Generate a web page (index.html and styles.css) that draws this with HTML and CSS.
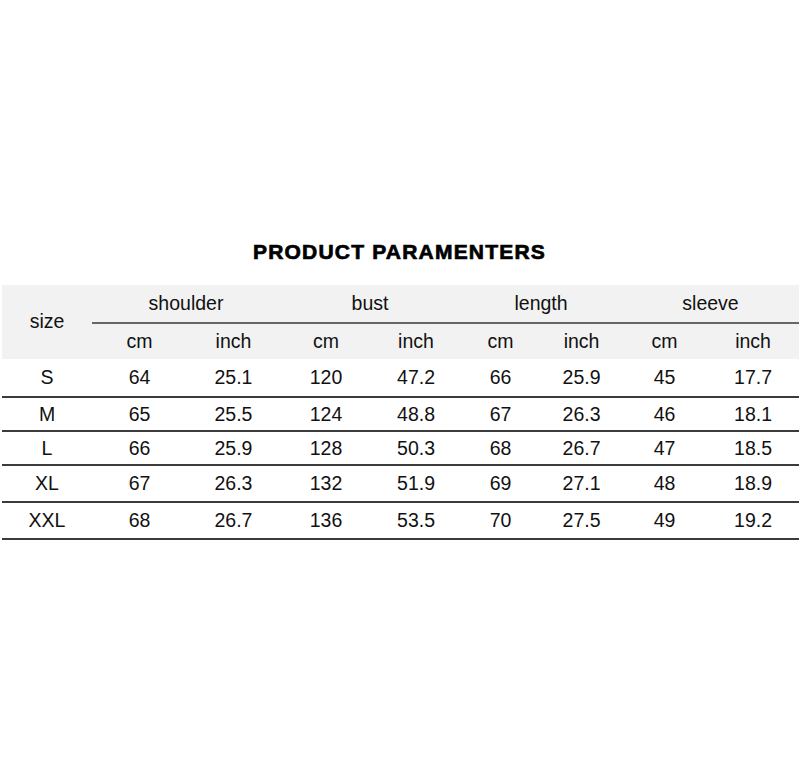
FILE: index.html
```html
<!DOCTYPE html>
<html>
<head>
<meta charset="utf-8">
<link rel="stylesheet" href="styles.css">
</head>
<body>
<div class="page">
  <h1 class="title">PRODUCT PARAMENTERS</h1>
  <table class="sizes">
    <colgroup>
      <col class="c-size"><col class="c1"><col class="c2"><col class="c3"><col class="c4"><col class="c5"><col class="c6"><col class="c7"><col class="c8">
    </colgroup>
    <thead>
      <tr class="h1">
        <th rowspan="2" class="size-h">size</th>
        <th colspan="2" class="grp">shoulder</th>
        <th colspan="2" class="grp">bust</th>
        <th colspan="2" class="grp">length</th>
        <th colspan="2" class="grp">sleeve</th>
      </tr>
      <tr class="h2">
        <th>cm</th><th>inch</th><th>cm</th><th>inch</th><th>cm</th><th>inch</th><th>cm</th><th>inch</th>
      </tr>
    </thead>
    <tbody>
      <tr class="r1"><td>S</td><td>64</td><td>25.1</td><td>120</td><td>47.2</td><td>66</td><td>25.9</td><td>45</td><td>17.7</td></tr>
      <tr class="r2"><td>M</td><td>65</td><td>25.5</td><td>124</td><td>48.8</td><td>67</td><td>26.3</td><td>46</td><td>18.1</td></tr>
      <tr class="r3"><td>L</td><td>66</td><td>25.9</td><td>128</td><td>50.3</td><td>68</td><td>26.7</td><td>47</td><td>18.5</td></tr>
      <tr class="r4"><td>XL</td><td>67</td><td>26.3</td><td>132</td><td>51.9</td><td>69</td><td>27.1</td><td>48</td><td>18.9</td></tr>
      <tr class="r5"><td>XXL</td><td>68</td><td>26.7</td><td>136</td><td>53.5</td><td>70</td><td>27.5</td><td>49</td><td>19.2</td></tr>
    </tbody>
  </table>
</div>
</body>
</html>
```

FILE: styles.css
```css
html, body {
  margin: 0;
  padding: 0;
  background: #ffffff;
}
body {
  font-family: "Liberation Sans", Arial, sans-serif;
  color: #111;
}
.page {
  width: 799px;
  height: 779px;
  padding-top: 240px;
  box-sizing: border-box;
}
.title {
  margin: 0 0 21px 0;
  text-align: center;
  font-size: 21px;
  line-height: 24px;
  font-weight: 700;
  letter-spacing: 1.2px;
  color: #000;
  -webkit-text-stroke: 0.7px #000;
}
.sizes {
  margin-left: 2px;
  width: 797px;
  border-collapse: collapse;
  table-layout: fixed;
  font-size: 19.5px;
}
.c-size { width: 90px; }
.c1 { width: 95px; }
.c2 { width: 93px; }
.c3 { width: 92px; }
.c4 { width: 88px; }
.c5 { width: 81px; }
.c6 { width: 81px; }
.c7 { width: 85px; }
.c8 { width: 92px; }
th, td {
  padding: 0;
  text-align: center;
  font-weight: 400;
  vertical-align: middle;
}
thead tr {
  background: #f2f2f2;
}
.h1 th {
  height: 37px;
}
.h1 .grp {
  border-bottom: 2px solid #666;
}
.h2 th {
  height: 35px;
}
.size-h {
  padding-bottom: 2px;
}
tbody td {
  border-bottom: 2px solid #3c3c3c;
}
.r1 td { height: 37px; }
.r2 td { height: 32px; }
.r3 td { height: 32px; }
.r4 td { height: 35px; }
.r5 td { height: 35px; }
```
